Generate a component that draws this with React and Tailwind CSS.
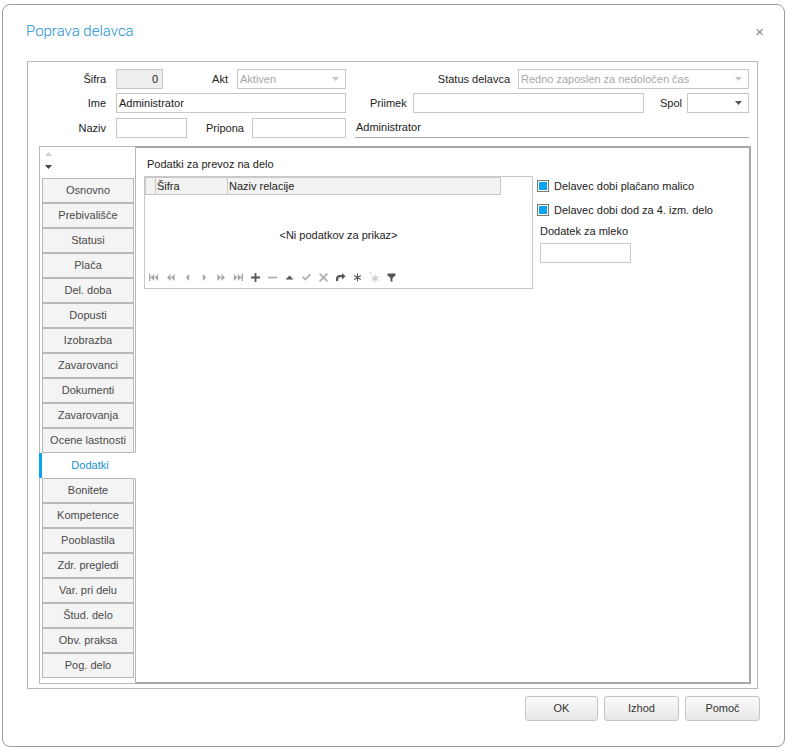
import { useState } from 'react';

const TABS = [
  'Osnovno', 'Prebivališče', 'Statusi', 'Plača', 'Del. doba', 'Dopusti', 'Izobrazba',
  'Zavarovanci', 'Dokumenti', 'Zavarovanja', 'Ocene lastnosti', 'Dodatki', 'Bonitete',
  'Kompetence', 'Pooblastila', 'Zdr. pregledi', 'Var. pri delu', 'Štud. delo',
  'Obv. praksa', 'Pog. delo',
];

const font = { fontFamily: '"Liberation Sans", Arial, sans-serif' };

const fieldCls = 'h-[20px] border border-[#c8c8c8] px-[2px] text-[11px] text-[#222] leading-[18px]';
const inputCls = `${fieldCls} bg-white`;

const Caret = ({ light }) => (
  <svg width="7" height="4" viewBox="0 0 7 4" className="shrink-0">
    <path d="M0 0h7L3.5 4z" fill={light ? '#c4c4c4' : '#555'} />
  </svg>
);

const Combo = ({ w, value, disabled }) => (
  <div className={`${inputCls} flex items-center justify-between pr-[6px] ${w} ${disabled ? 'text-[#a8a8a8]' : ''}`}>
    <span className="truncate">{value}</span>
    <Caret light={disabled} />
  </div>
);

const Label = ({ w, children, className = '' }) => (
  <div className={`${w} text-right text-[11px] text-[#222] shrink-0 ${className}`}>{children}</div>
);

// grid navigator glyphs, 11x11 each
const NAV = [
  { c: '#a8a8a8', d: 'M1 2h1.5v7H1zM6.2 2v7L2.6 5.5zM10.2 2v7L6.6 5.5z' },
  { c: '#a8a8a8', d: 'M5.6 2v7L2 5.5zM9.6 2v7L6 5.5z' },
  { c: '#a8a8a8', d: 'M7.2 2v7L3.7 5.5z' },
  { c: '#a8a8a8', d: 'M3.8 2v7l3.5-3.5z' },
  { c: '#a8a8a8', d: 'M1.4 2v7L5 5.5zM5.4 2v7L9 5.5z' },
  { c: '#a8a8a8', d: 'M0.8 2v7l3.6-3.5zM4.8 2v7l3.6-3.5zM8.5 2H10v7H8.5z' },
  { c: '#555', d: 'M4.6 1h1.8v3.6H10v1.8H6.4V10H4.6V6.4H1V4.6h3.6z' },
  { c: '#b0b0b0', d: 'M1 4.6h9v1.8H1z' },
  { c: '#555', d: 'M1.5 7.5h8L5.5 3.5z' },
  { c: '#b0b0b0', d: 'M1 5.5l1.3-1.3 2 2L8.7 1.8 10 3.1 4.3 8.8z' },
  { c: '#b0b0b0', d: 'M2.2 1 5.5 4.3 8.8 1 10 2.2 6.7 5.5 10 8.8 8.8 10 5.5 6.7 2.2 10 1 8.8 4.3 5.5 1 2.2z' },
  { c: '#555', d: 'M1 9V6.8C1 4.6 2.5 3 5 3H7V1l3.5 3.2L7 7.4V5.2H5.3C3.9 5.2 3.2 6 3.2 7.3V9z' },
  { c: '#555', d: 'M5 1.5h1v3l2.6-1.5.5.9L6.5 5.5l2.6 1.6-.5.9L6 6.5v3H5v-3L2.4 8l-.5-.9 2.6-1.6-2.6-1.6.5-.9L5 4.5z' },
  { c: '#c4c4c4', d: 'M5.5 2.5h1v3l2.6-1.5.5.9L7 6.5l2.6 1.6-.5.9L6.5 7.5v3h-1v-3L2.9 9l-.5-.9L5 6.5 2.4 4.9l.5-.9L5.5 5.5zM1 0h1v2H1z' },
  { c: '#555', d: 'M1.5 1.5h8v2L6.5 6v3.5h-2V6L1.5 3.5zM3 2.7h5v.6H3z' },
];

const CheckBox = ({ label }) => (
  <div className="flex items-center gap-[5px] h-[14px]">
    <div className="w-[12px] h-[12px] border border-[#7a7a7a] bg-white p-[1px] shrink-0">
      <div className="w-full h-full bg-[#0aa2f2]" />
    </div>
    <span className="text-[11px] text-[#222]">{label}</span>
  </div>
);

export default function App() {
  const [active, setActive] = useState('Dodatki');

  return (
    <div className="w-[787px] h-[751px] bg-white pt-[4px] pl-[2px]" style={font}>
      <div className="w-[783px] h-[743px] border border-[#9c9c9c] rounded-[8px] flex flex-col bg-white">
        {/* title bar */}
        <div className="h-[56px] pl-[23px] pr-[20px] pb-[4px] flex items-center justify-between shrink-0">
          <span className="text-[15px] text-[#1a8fd6] font-light" style={{ fontFamily: 'Roboto, "Liberation Sans", sans-serif' }}>Poprava delavca</span>
          <span className="text-[15px] text-[#8a8a8a] leading-none">×</span>
        </div>

        {/* group box */}
        <div className="mx-[24px] w-[731px] h-[628px] border border-[#b8b8b8] flex flex-col shrink-0">
          {/* row 1 */}
          <div className="flex items-center mt-[7px] h-[20px]">
            <Label w="w-[78px]">Šifra</Label>
            <div className={`${fieldCls} ml-[10px] w-[47px] bg-[#eeeeee] text-right pr-[4px]`}>0</div>
            <Label w="w-[65px]">Akt</Label>
            <div className="ml-[9px]"><Combo w="w-[109px]" value="Aktiven" disabled /></div>
            <Label w="w-[164px]">Status delavca</Label>
            <div className="ml-[8px]"><Combo w="w-[231px]" value="Redno zaposlen za nedoločen čas" disabled /></div>
          </div>

          {/* row 2 */}
          <div className="flex items-center mt-[4px] h-[20px]">
            <Label w="w-[78px]">Ime</Label>
            <div className={`${inputCls} ml-[10px] w-[230px]`}>Administrator</div>
            <span className="ml-[24px] text-[11px] text-[#222] w-[43px]">Priimek</span>
            <div className={`${inputCls} w-[231px]`} />
            <Label w="w-[38px]">Spol</Label>
            <div className="ml-[5px]"><Combo w="w-[62px]" value="" /></div>
          </div>

          {/* row 3 */}
          <div className="flex items-center mt-[5px] h-[20px]">
            <Label w="w-[78px]">Naziv</Label>
            <div className={`${inputCls} ml-[10px] w-[71px]`} />
            <span className="ml-[19px] text-[11px] text-[#222] w-[46px]">Pripona</span>
            <div className={`${inputCls} w-[94px]`} />
            <div className="ml-[9px] w-[394px] h-[19px] border-b border-[#a8a8a8] text-[11px] text-[#222] flex items-end pb-[1px] pl-[1px]">
              Administrator
            </div>
          </div>

          {/* tabs + page */}
          <div className="mt-[8px] ml-[11px] w-[712px] h-[538px] flex">
            <div className="w-[96px] h-full border border-[#b8b8b8] border-r-0 flex flex-col shrink-0">
              <div className="h-[31px] pl-[5px] pt-[5px] flex flex-col gap-[9px]">
                <svg width="7" height="4" viewBox="0 0 7 4"><path d="M0 4h7L3.5 0z" fill="#cfcfcf" /></svg>
                <svg width="7" height="4" viewBox="0 0 7 4"><path d="M0 0h7L3.5 4z" fill="#444" /></svg>
              </div>
              <div className="flex flex-col">
                {TABS.map((t) =>
                  t === active ? (
                    <div key={t} className="h-[25px] -ml-px mr-[-1px] flex items-center border-l-[3px] border-[#0aa2f2] bg-white relative z-10">
                      <span className="flex-1 text-center text-[11px] text-[#1a8fd6] pl-[2px]">{t}</span>
                    </div>
                  ) : (
                    <button
                      key={t}
                      type="button"
                      onClick={() => setActive(t)}
                      className="h-[25px] ml-[2px] w-[92px] border border-[#b8b8b8] bg-[#f4f4f4] text-[11px] text-[#4a4a4a] flex items-center justify-center"
                    >
                      {t}
                    </button>
                  )
                )}
              </div>
            </div>

            {/* page */}
            <div className="flex-1 h-full border-l border-[#b8b8b8] border-t-2 border-r-2 border-b-2 border-t-[#a8a8a8] border-r-[#a8a8a8] border-b-[#a8a8a8] pl-[8px] flex">
              <div className="flex flex-col">
                <div className="text-[11px] text-[#222] pl-[3px] mt-[8px] h-[14px]">Podatki za prevoz na delo</div>
                <div className="mt-[6px] w-[389px] h-[113px] border border-[#c8c8c8] flex flex-col">
                  <div className="flex h-[18px] text-[11px] text-[#222]">
                    <div className="w-[11px] border border-[#c8c8c8] bg-[#f2f2f2]" />
                    <div className="w-[72px] border border-l-0 border-[#c8c8c8] bg-[#f2f2f2] pl-[1px] leading-[16px]">Šifra</div>
                    <div className="w-[273px] border border-l-0 border-[#c8c8c8] bg-[#f2f2f2] pl-[1px] leading-[16px]">Naziv relacije</div>
                  </div>
                  <div className="flex-1 flex items-center justify-center text-[11px] text-[#222] pt-[4px]">&lt;Ni podatkov za prikaz&gt;</div>
                  <div className="flex items-center gap-[6px] pl-[3px] pb-[5px]">
                    {NAV.map((n, i) => (
                      <svg key={i} width="11" height="11" viewBox="0 0 11 11">
                        <path d={n.d} fill={n.c} />
                      </svg>
                    ))}
                  </div>
                </div>
              </div>

              <div className="ml-[4px] mt-[31px] flex flex-col">
                <CheckBox label="Delavec dobi plačano malico" />
                <div className="mt-[10px]"><CheckBox label="Delavec dobi dod za 4. izm. delo" /></div>
                <div className="mt-[6px] pl-[3px] text-[11px] text-[#222]">Dodatek za mleko</div>
                <div className={`${inputCls} ml-[3px] mt-[3px] w-[91px] h-[20px]`} />
              </div>
            </div>
          </div>
        </div>

        {/* buttons */}
        <div className="flex justify-end gap-[6px] pr-[24px] pt-[7px]">
          {['OK', 'Izhod', 'Pomoč'].map((b, i) => (
            <button
              key={b}
              type="button"
              className={`h-[25px] ${i === 0 ? 'w-[73px]' : 'w-[75px]'} rounded-[3px] border border-[#c4c4c4] bg-gradient-to-b from-[#fafafa] to-[#e8e8e8] text-[11px] text-[#333]`}
            >
              {b}
            </button>
          ))}
        </div>
      </div>
    </div>
  );
}
